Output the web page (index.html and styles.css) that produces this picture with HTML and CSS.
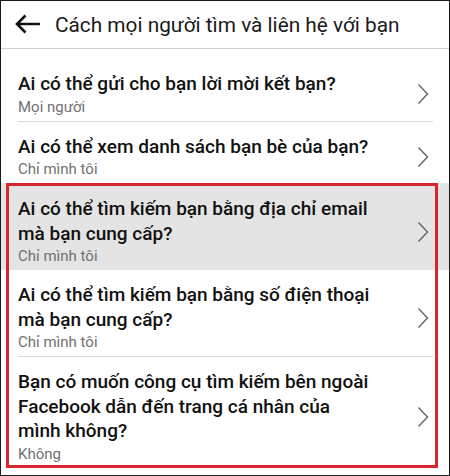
FILE: index.html
```html
<!DOCTYPE html>
<html lang="vi">
<head>
<meta charset="utf-8">
<title>Cách mọi người tìm và liên hệ với bạn</title>
<link rel="stylesheet" href="styles.css">
</head>
<body>
<div class="screen">
  <header class="appbar">
    <svg class="back" width="28" height="20" viewBox="0 0 28 20" aria-hidden="true">
      <path d="M26 10H3.5M11.5 1.5L3 10l8.5 8.5" fill="none" stroke="#111" stroke-width="2.6" stroke-linecap="butt" stroke-linejoin="miter"/>
    </svg>
    <h1 class="appbar-title">Cách mọi người tìm và liên hệ với bạn</h1>
  </header>

  <main class="settings">
    <a class="row">
      <div class="row-body">
        <div class="row-text">
          <div class="row-title">Ai có thể gửi cho bạn lời mời kết bạn?</div>
          <div class="row-value">Mọi người</div>
        </div>
        <svg class="chevron" width="12" height="22" viewBox="0 0 12 22" aria-hidden="true"><path d="M1.5 1.5L10.5 11l-9 9.5" /></svg>
      </div>
    </a>
    <a class="row">
      <div class="row-body">
        <div class="row-text">
          <div class="row-title">Ai có thể xem danh sách bạn bè của bạn?</div>
          <div class="row-value">Chỉ mình tôi</div>
        </div>
        <svg class="chevron" width="12" height="22" viewBox="0 0 12 22" aria-hidden="true"><path d="M1.5 1.5L10.5 11l-9 9.5" /></svg>
      </div>
    </a>

    <div class="group">
      <a class="row is-pressed">
        <div class="row-body">
          <div class="row-text">
            <div class="row-title">Ai có thể tìm kiếm bạn bằng địa chỉ email<br>mà bạn cung cấp?</div>
            <div class="row-value">Chỉ mình tôi</div>
          </div>
          <svg class="chevron" width="12" height="22" viewBox="0 0 12 22" aria-hidden="true"><path d="M1.5 1.5L10.5 11l-9 9.5" /></svg>
        </div>
      </a>
      <a class="row">
        <div class="row-body">
          <div class="row-text">
            <div class="row-title">Ai có thể tìm kiếm bạn bằng số điện thoại<br>mà bạn cung cấp?</div>
            <div class="row-value">Chỉ mình tôi</div>
          </div>
          <svg class="chevron" width="12" height="22" viewBox="0 0 12 22" aria-hidden="true"><path d="M1.5 1.5L10.5 11l-9 9.5" /></svg>
        </div>
      </a>
      <a class="row">
        <div class="row-body">
          <div class="row-text">
            <div class="row-title">Bạn có muốn công cụ tìm kiếm bên ngoài<br>Facebook dẫn đến trang cá nhân của<br>mình không?</div>
            <div class="row-value">Không</div>
          </div>
          <svg class="chevron" width="12" height="22" viewBox="0 0 12 22" aria-hidden="true"><path d="M1.5 1.5L10.5 11l-9 9.5" /></svg>
        </div>
      </a>
      <div class="group-outline"></div>
    </div>
  </main>
</div>
</body>
</html>
```

FILE: styles.css
```css
* {
  box-sizing: border-box;
}

html, body {
  margin: 0;
  padding: 0;
  background: #fff;
}

body {
  font-family: Roboto, "Noto Sans", "Liberation Sans", sans-serif;
  color: #111;
}

.screen {
  width: 450px;
  height: 476px;
  border: 1px solid #1a1a1a;
  overflow: hidden;
  background: #fff;
}

/* top bar */
.appbar {
  height: 48px;
  display: flex;
  align-items: center;
  border-bottom: 1px solid #cfcfcf;
  padding-left: 13px;
}

.back {
  display: block;
  flex: none;
  margin-top: -1px;
}

.appbar-title {
  margin: 0 0 0 13px;
  font-size: 20.8px;
  font-weight: 400;
  color: #1a1a1a;
  white-space: nowrap;
}

/* settings list */
.settings {
  padding-top: 10px;
}

.row {
  display: block;
  padding-left: 17px;
  color: inherit;
  text-decoration: none;
}

.row-body {
  display: flex;
  align-items: center;
  margin-right: 16px;
  padding: 13px 4px 4px 0;
}

.row + .row .row-body,
.row + .group .row:first-child .row-body {
  border-top: 1px solid #dcdcdc;
}

.row.is-pressed {
  background: #e4e4e4;
}

.row.is-pressed .row-body,
.row.is-pressed + .row .row-body {
  border-top: none;
}

.row-text {
  flex: 1;
  min-width: 0;
}

.row-title {
  font-size: 19px;
  line-height: 24.5px;
  font-weight: 500;
  color: #111;
}

.row-value {
  font-size: 15px;
  line-height: 20px;
  color: #717171;
}

.chevron {
  flex: none;
  display: block;
}

.chevron path {
  fill: none;
  stroke: #6a6a6a;
  stroke-width: 1.5;
}

/* highlighted group of search-related options */
.group {
  position: relative;
}

.group-outline {
  position: absolute;
  left: 5px;
  right: 11px;
  top: 0;
  bottom: 0;
  border: 3px solid #d8262e;
  pointer-events: none;
}
```
